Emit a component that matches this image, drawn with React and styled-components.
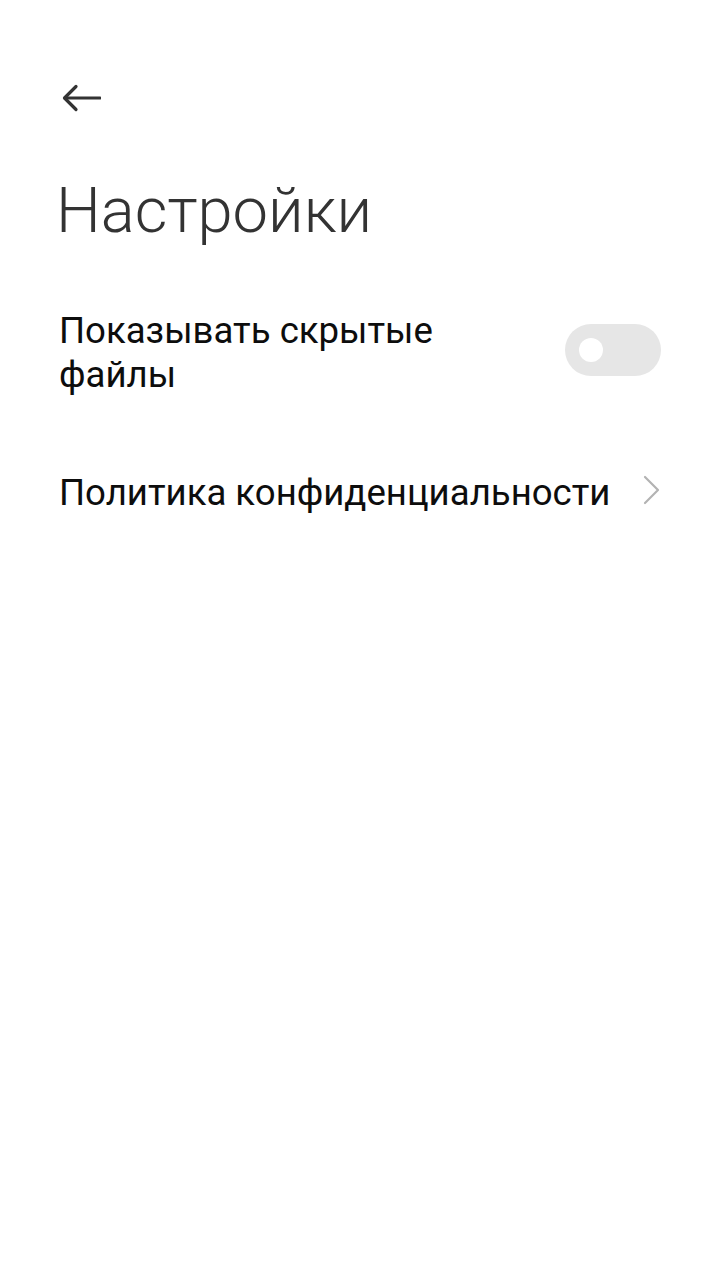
import React from 'react';
import styled, { createGlobalStyle } from 'styled-components';

const Global = createGlobalStyle`
  html, body {
    margin: 0;
    padding: 0;
    background: #fff;
  }
  body {
    font-family: Roboto, "Noto Sans", sans-serif;
    -webkit-font-smoothing: antialiased;
  }
`;

const Page = styled.div`
  width: 720px;
  min-height: 1280px;
  box-sizing: border-box;
  background: #fff;
  padding: 0 59px;
`;

const TopBar = styled.header`
  height: 178px;
  display: flex;
  align-items: flex-start;
  padding-top: 80px;
  box-sizing: border-box;
`;

const BackButton = styled.button`
  border: 0;
  background: none;
  padding: 0;
  margin-left: 2px;
  width: 40px;
  height: 36px;
  display: flex;
  align-items: center;
  justify-content: flex-start;
  cursor: pointer;
`;

const Title = styled.h1`
  margin: 0 0 0 -3px;
  font-weight: 300;
  font-size: 63.3px;
  line-height: 64px;
  color: #333;
`;

const List = styled.div`
  margin-top: 46px;
  display: flex;
  flex-direction: column;
`;

const Row = styled.div`
  display: flex;
  align-items: center;
  justify-content: space-between;
  min-height: ${p => p.$height}px;
`;

const Label = styled.span`
  font-size: 36.6px;
  line-height: 44px;
  color: #0d0d0d;
  max-width: ${p => p.$max || 'none'};
`;

const Track = styled.div`
  width: 96px;
  height: 52px;
  margin-bottom: 6px;
  border-radius: 26px;
  background: #e6e6e6;
  display: flex;
  align-items: center;
  padding-left: 14px;
  box-sizing: border-box;
  flex-shrink: 0;
`;

const Knob = styled.div`
  width: 24px;
  height: 24px;
  border-radius: 50%;
  background: #fff;
`;

const Chevron = styled.svg`
  flex-shrink: 0;
  margin-bottom: 6px;
`;

export default function App() {
  return (
    <Page>
      <Global />
      <TopBar>
        <BackButton aria-label="Назад">
          <svg width="40" height="36" viewBox="0 0 40 36" fill="none">
            <path d="M39 18H4" stroke="#333" strokeWidth="3.2" strokeLinecap="round" />
            <path d="M15 6.5L3.5 18L15 29.5" stroke="#333" strokeWidth="3.2" strokeLinecap="round" strokeLinejoin="round" />
          </svg>
        </BackButton>
      </TopBar>
      <Title>Настройки</Title>
      <List>
        <Row $height={130}>
          <Label $max="430px">Показывать скрытые файлы</Label>
          <Track>
            <Knob />
          </Track>
        </Row>
        <Row $height={150}>
          <Label>Политика конфиденциальности</Label>
          <Chevron width="18" height="30" viewBox="0 0 18 30" fill="none">
            <path d="M2 2L15 15L2 28" stroke="#b3b3b3" strokeWidth="2.2" strokeLinecap="round" strokeLinejoin="round" />
          </Chevron>
        </Row>
      </List>
    </Page>
  );
}
